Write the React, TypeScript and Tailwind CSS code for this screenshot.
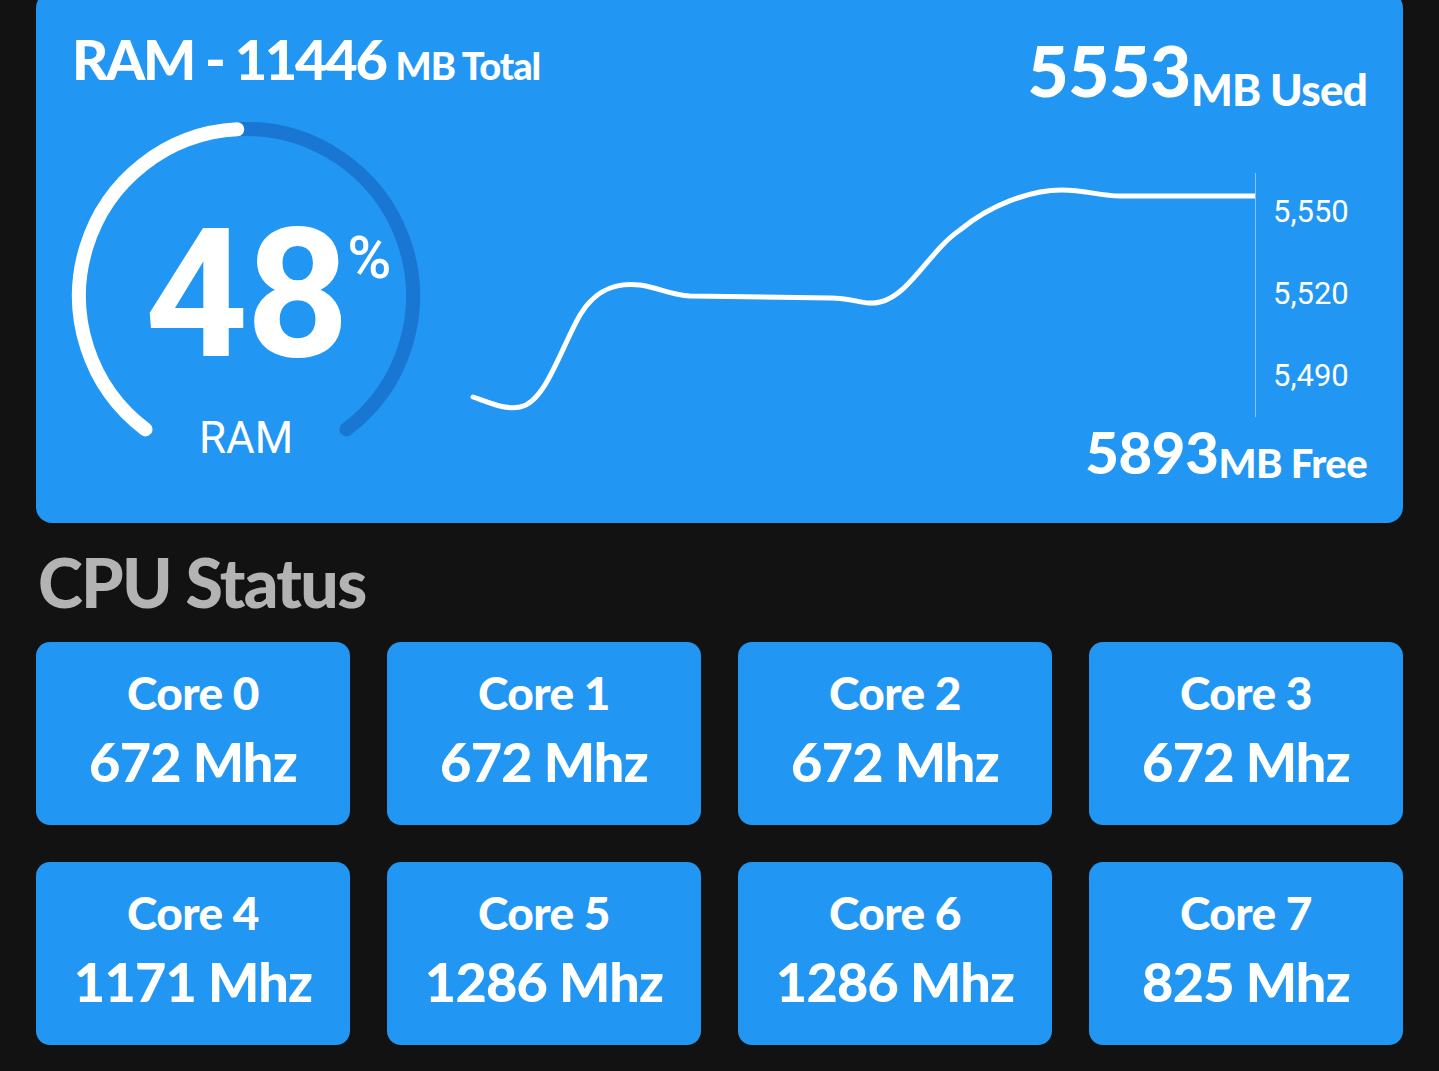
import React from "react";

const cores = [
  { name: "Core 0", mhz: "672 Mhz" },
  { name: "Core 1", mhz: "672 Mhz" },
  { name: "Core 2", mhz: "672 Mhz" },
  { name: "Core 3", mhz: "672 Mhz" },
  { name: "Core 4", mhz: "1171 Mhz" },
  { name: "Core 5", mhz: "1286 Mhz" },
  { name: "Core 6", mhz: "1286 Mhz" },
  { name: "Core 7", mhz: "825 Mhz" },
];

function arcPath(cx: number, cy: number, r: number, a0: number, a1: number) {
  const p = (a: number) => {
    const rad = (a * Math.PI) / 180;
    return [cx + r * Math.sin(rad), cy - r * Math.cos(rad)];
  };
  const [x0, y0] = p(a0);
  const [x1, y1] = p(a1);
  const large = Math.abs(a1 - a0) > 180 ? 1 : 0;
  return `M ${x0} ${y0} A ${r} ${r} 0 ${large} 1 ${x1} ${y1}`;
}

function Gauge() {
  return (
    <div className="relative w-[350px] h-[350px] shrink-0">
      <svg width="350" height="350" viewBox="0 0 350 350" className="absolute inset-0">
        <path d={arcPath(175, 175, 167, -3, 143)} fill="none" stroke="#1976d2" strokeWidth="14" strokeLinecap="round" />
        <path d={arcPath(175, 175, 167, -143, -3)} fill="none" stroke="#ffffff" strokeWidth="14" strokeLinecap="round" />
      </svg>
      <div className="absolute inset-0 flex flex-col items-center font-['Roboto',sans-serif] text-white">
        <div className="mt-[84px] relative leading-none text-[180px] font-bold tracking-[-2px]">
          48
          <span className="absolute left-full top-[23px] ml-[0px] text-[60px] font-medium leading-none">%</span>
        </div>
        <div className="mt-[31px] text-[44px] leading-none font-normal">RAM</div>
      </div>
    </div>
  );
}

function Chart() {
  return (
    <svg width="785" height="250" viewBox="0 0 785 250" className="shrink-0">
      <path
        d="M3,227 C20,233 35,240 50,237 C75,233 90,180 110,145 C125,120 145,112 170,115 C190,118 200,125 220,126 L360,128 C385,128 395,136 410,132 C440,125 460,80 490,60 C520,35 560,20 592,20 C615,20 630,26 650,26 L785,26"
        fill="none"
        stroke="#ffffff"
        strokeWidth="5"
        strokeLinecap="round"
        strokeLinejoin="round"
      />
    </svg>
  );
}

export default function App() {
  return (
    <div className="min-h-[1071px] w-full bg-[#121212] px-[36px] pb-[27px] font-['Lato',sans-serif] overflow-hidden">
      {/* RAM card */}
      <div className="-mt-[8px] h-[531px] rounded-[16px] bg-[#2196f3] px-[36px] text-white flex flex-col">
        <div className="flex justify-between items-start">
          <div className="mt-[39px] flex items-baseline font-black leading-none">
            <span className="text-[56px] tracking-[-2.3px]">RAM - 11446</span>
            <span className="ml-[10px] text-[38px] tracking-[-1px]">MB Total</span>
          </div>
          <div className="mt-[42px] flex items-end font-black leading-none">
            <span className="text-[71px] tracking-[-0.3px] mb-[6px]">5553</span>
            <span className="text-[44px] tracking-[-0.8px]">MB Used</span>
          </div>
        </div>
        <div className="flex items-start">
          <div className="mt-[10px] -ml-[1px]">
            <Gauge />
          </div>
          <div className="flex-1 flex flex-col">
            <div className="mt-[59px] ml-[49px] flex items-start">
              <Chart />
              <div className="mt-[3px] h-[244px] flex-1 border-l border-[rgba(255,255,255,0.45)] pl-[17px] pt-[24px] flex flex-col gap-[52px] font-['Roboto',sans-serif] text-[31px] leading-[30px] text-white">
                <span>5,550</span>
                <span>5,520</span>
                <span>5,490</span>
              </div>
            </div>
            <div className="mt-[3px] flex justify-end items-end font-black leading-none">
              <span className="text-[58px] tracking-[-0.3px] mb-[2px]">5893</span>
              <span className="text-[40px] tracking-[-0.6px]">MB Free</span>
            </div>
          </div>
        </div>
      </div>

      {/* CPU Status */}
      <h2 className="mt-[25px] ml-[2px] text-[68px] leading-none font-black text-[#b3b3b3] tracking-[-1.7px]">CPU Status</h2>

      <div className="mt-[26px] grid grid-cols-4 gap-[37px]">
        {cores.map((c) => (
          <div key={c.name} className="h-[183px] rounded-[14px] bg-[#2196f3] flex flex-col items-center justify-center text-white font-black leading-none pb-[8px]">
            <span className="text-[46px] tracking-[-0.6px]">{c.name}</span>
            <span className="mt-[19px] text-[54px] tracking-[-0.8px]">{c.mhz}</span>
          </div>
        ))}
      </div>
    </div>
  );
}
